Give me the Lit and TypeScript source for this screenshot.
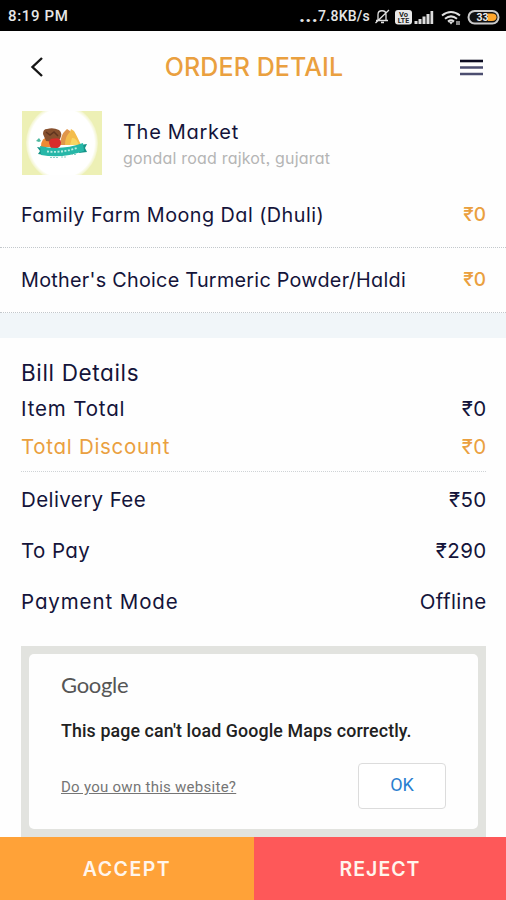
import { LitElement, html, css } from "lit";
import { customElement, property } from "lit/decorators.js";

@customElement("status-bar")
class StatusBar extends LitElement {
  static styles = css`
    :host { display: flex; align-items: center; height: 31px; background: #000; color: #e6e6e6; font: 500 15px/31px Roboto, sans-serif; padding: 2px 6px 0 8px; box-sizing: border-box; }
    .time { flex: 1; letter-spacing: 0.65px; }
    .net { font-size: 14px; letter-spacing: .25px; }
    .dots { font-size: 21px; font-weight: 700; letter-spacing: 0.3px; line-height: 20px; margin-bottom: 4px; }
    svg { display: block; flex: none; }
  `;
  render() {
    return html`
      <span class="time">8:19 PM</span>
      <span class="dots">...</span><span class="net">7.8KB/s</span>
      <svg width="136" height="28" viewBox="370 2 136 28" style="margin-right:-6px">
        <g fill="none" stroke="#e0e0e0" stroke-width="1.3">
          <path d="M376 19.5h12M378 19v-5.500c0-5 8-5 8 0V19M381 21.500h3M375.500 22 389 9" />
        </g>
        <rect x="395" y="9" width="17" height="14.500" rx="3" fill="#e8e8e8" />
        <text x="403.500" y="15.800" font-size="7.500" font-weight="700" text-anchor="middle" fill="#222">Vo</text>
        <text x="403.500" y="22.300" font-size="7" font-weight="700" text-anchor="middle" fill="#222">LTE</text>
        <g fill="#ddd">
          <rect x="414.500" y="20" width="3" height="3" /><rect x="418.500" y="18" width="3" height="5" />
          <rect x="422.500" y="15.500" width="3" height="7.500" /><rect x="426.500" y="13" width="3" height="10" />
          <rect x="430.500" y="10" width="2.700" height="13" />
        </g>
        <g fill="none" stroke="#e0e0e0" stroke-width="2">
          <path d="M442 14.500q9-7 18 0M445 17.800q6-4.800 12 0M448 20.600q3-2.400 6 0" />
        </g>
        <path d="M449 21h4l-2 2.500z" fill="#e0e0e0" /><rect x="456" y="20" width="4" height="4" fill="#888" />
        <rect x="468.500" y="10" width="30" height="12.500" rx="6.200" fill="#111" stroke="#ccc" stroke-width="2" />
        <path d="M488 12.500h4q4.500 0 4.500 3.700t-4.500 3.800h-4z" fill="#ffa62b" />
        <text x="482.500" y="20" font-size="10.500" font-weight="700" text-anchor="middle" fill="#eee">33</text>
      </svg>`;
  }
}

@customElement("bill-row")
class BillRow extends LitElement {
  @property() label = "";
  @property() amount = "";
  static styles = css`
    :host { display: flex; align-items: center; justify-content: space-between; white-space: nowrap; }
    .amount { letter-spacing: .4px; margin-right: -.6px; }
  `;
  render() {
    return html`<span>${this.label}</span><span class="amount">${this.amount}</span>`;
  }
}

@customElement("store-logo")
class StoreLogo extends LitElement {
  static styles = css`:host, svg { display: block; }`;
  render() {
    return html`<svg width="80" height="64" viewBox="0 0 80 64">
      <defs><radialGradient id="glow"><stop offset=".9" stop-color="#fff" /><stop offset="1" stop-color="#fff" stop-opacity=".25" /></radialGradient></defs>
      <rect width="80" height="64" fill="#edf0b5" />
      <ellipse cx="40" cy="32" rx="36" ry="38" fill="url(#glow)" />
      <path d="M38 34q1-11 5-14l2-2 3 2q3 4 3 14z" fill="#e0964a" />
      <path d="M43 34q0-9 5-13l1-3 3 2q3 5 7 14z" fill="#f4bd4c" />
      <path d="M50 27q4-1 7 7H48z" fill="#f8d662" />
      <path d="M19 36q0-10 8-10l5 10z" fill="#f08a35" />
      <path d="M21 23q0-5 4-5 6-2 12 1 4 3 1 9l-6 3-8-1z" fill="#87502e" />
      <path d="M24 21l4 3 4-3 4 4" fill="none" stroke="#5f341f" stroke-width="1.500" />
      <path d="M27 32q0-5 5.500-4.500 6-1 6.500 4 0 5-5 6h-5z" fill="#d92d2b" />
      <path d="M14 30l3-3 2 3-2 1z" fill="#4eb8a0" />
      <path d="M15 36l7 1v7l-6-1 2-3zM58 34l7-1-2 4 2 4-8 1z" fill="#159488" />
      <path d="M18 35q21 5 43-3l1 8q-22 8-43 4z" fill="#27b7a8" />
      <path d="M25 40.500q15 1.500 30-3.500" fill="none" stroke="#b9eee5" stroke-width="1.800" stroke-dasharray="2 1.500" />
      <path d="M28 46.500h8M39 46h6M49 43.500h5" stroke="#8acfc5" stroke-width="1" stroke-dasharray="2 1" />
    </svg>`;
  }
}

@customElement("app-root")
class AppRoot extends LitElement {
  static styles = css`
    :host { display: flex; flex-direction: column; height: 900px; overflow: hidden; background: #fefefe; color: #14143a; font: 400 20.5px/28px Inter, "Noto Sans", sans-serif; font-feature-settings: "cv11", "ss03"; }
    header { display: flex; align-items: center; height: 72px; padding: 0 22px 0 29px; }
    header svg { flex: none; }
    h1 { flex: 1; margin: 0; text-align: center; font-size: 25px; font-weight: 500; color: #eaa03f; white-space: nowrap; padding-left: 4px; letter-spacing: .1px; }
    .store { display: flex; gap: 21px; height: 64px; margin: 8px 21px 0 22px; }
    .name { font-size: 20px; margin-top: 7px; white-space: nowrap; letter-spacing: .7px; }
    .addr { font-size: 16px; line-height: 22px; color: #b5b5b5; white-space: nowrap; letter-spacing: .2px; margin-top: 1px; }
    .item { display: flex; justify-content: space-between; align-items: center; white-space: nowrap; height: 64px; padding: 0 20px 0 21px; border-bottom: 1px dotted #c3c8cc; font-size: 19.8px; }
    .item.first { margin-top: 8px; }
    .i1 { letter-spacing: .46px; }
    .i2 { letter-spacing: .27px; }
    .price { color: #eaa03f; font-weight: 500; font-size: 19px; }
    .band { height: 25px; background: #f1f6f9; flex: none; }
    .bill { padding: 0 20px 0 21px; }
    h2 { font-size: 22.5px; font-weight: 400; margin: 20px 0 0; line-height: 30px; letter-spacing: .65px; }
    .total { height: 42px; letter-spacing: .85px; }
    .disc { height: 34px; color: #eaa03f; padding-bottom: 7px; border-bottom: 1px dotted #cfd3d6; letter-spacing: .7px; }
    .r51 { height: 51px; }
    .fee { margin-top: 2px; letter-spacing: .4px; }
    .pay { letter-spacing: .4px; }
    .mode { letter-spacing: .9px; }
    .map { margin: 19px 20px 0 21px; height: 191px; background: #e2e3df; padding: 8px; box-sizing: border-box; font-family: Roboto, sans-serif; flex: none; }
    .dialog { background: #fefefe; border-radius: 5px; height: 175px; padding: 18px 32px 0; box-sizing: border-box; }
    .google { font: 400 22px/26px Lato, sans-serif; color: #555; letter-spacing: -.3px; }
    .msg { font-size: 17.8px; font-weight: 500; color: #212121; line-height: 24px; margin-top: 21px; white-space: nowrap; letter-spacing: .12px; }
    .actions { display: flex; justify-content: space-between; align-items: center; margin-top: 20px; }
    .own { font-size: 15px; color: #757575; text-decoration: underline; letter-spacing: .27px; margin-top: 2px; }
    .ok { width: 88px; height: 46px; box-sizing: border-box; border: 1px solid #dcdcdc; border-radius: 4px; color: #2a7fd0; background: #fff; font: 400 18px Roboto, sans-serif; padding: 0 0 3px; }
    footer { display: flex; height: 63px; flex: none; }
    footer button { border: 0; padding: 0; flex: 1; color: #fff5ec; font: 600 19.5px Inter, sans-serif; letter-spacing: 1.5px; }
    footer .accept { background: #ffa238; flex: 0 0 254px; }
    footer .reject { background: #fe5859; letter-spacing: 1px; }
  `;
  render() {
    return html`
      <status-bar></status-bar>
      <header>
        <svg width="16" height="22" viewBox="0 0 16 22"><path d="M13 2 3.500 11 13 20" fill="none" stroke="#161616" stroke-width="2.400" /></svg>
        <h1>ORDER DETAIL</h1>
        <svg width="25" height="18" viewBox="0 0 25 18"><path d="M1 3h23" stroke="#0b0b20" stroke-width="2.600" /><path d="M1 9.500h23M1 16h23" stroke="#4c4e70" stroke-width="2.600" /></svg>
      </header>
      <div class="store">
        <store-logo></store-logo>
        <div><div class="name">The Market</div><div class="addr">gondal road rajkot, gujarat</div></div>
      </div>
      <div class="item first"><span class="i1">Family Farm Moong Dal (Dhuli)</span><span class="price">₹0</span></div>
      <div class="item"><span class="i2">Mother's Choice Turmeric Powder/Haldi</span><span class="price">₹0</span></div>
      <div class="band"></div>
      <section class="bill">
        <h2>Bill Details</h2>
        <bill-row class="total" label="Item Total" amount="₹0"></bill-row>
        <bill-row class="disc" label="Total Discount" amount="₹0"></bill-row>
        <bill-row class="r51 fee" label="Delivery Fee" amount="₹50"></bill-row>
        <bill-row class="r51 pay" label="To Pay" amount="₹290"></bill-row>
        <bill-row class="r51 mode" label="Payment Mode" amount="Offline"></bill-row>
      </section>
      <div class="map">
        <div class="dialog">
          <div class="google">Google</div>
          <div class="msg">This page can't load Google Maps correctly.</div>
          <div class="actions"><span class="own">Do you own this website?</span><button class="ok">OK</button></div>
        </div>
      </div>
      <footer><button class="accept">ACCEPT</button><button class="reject">REJECT</button></footer>`;
  }
}
